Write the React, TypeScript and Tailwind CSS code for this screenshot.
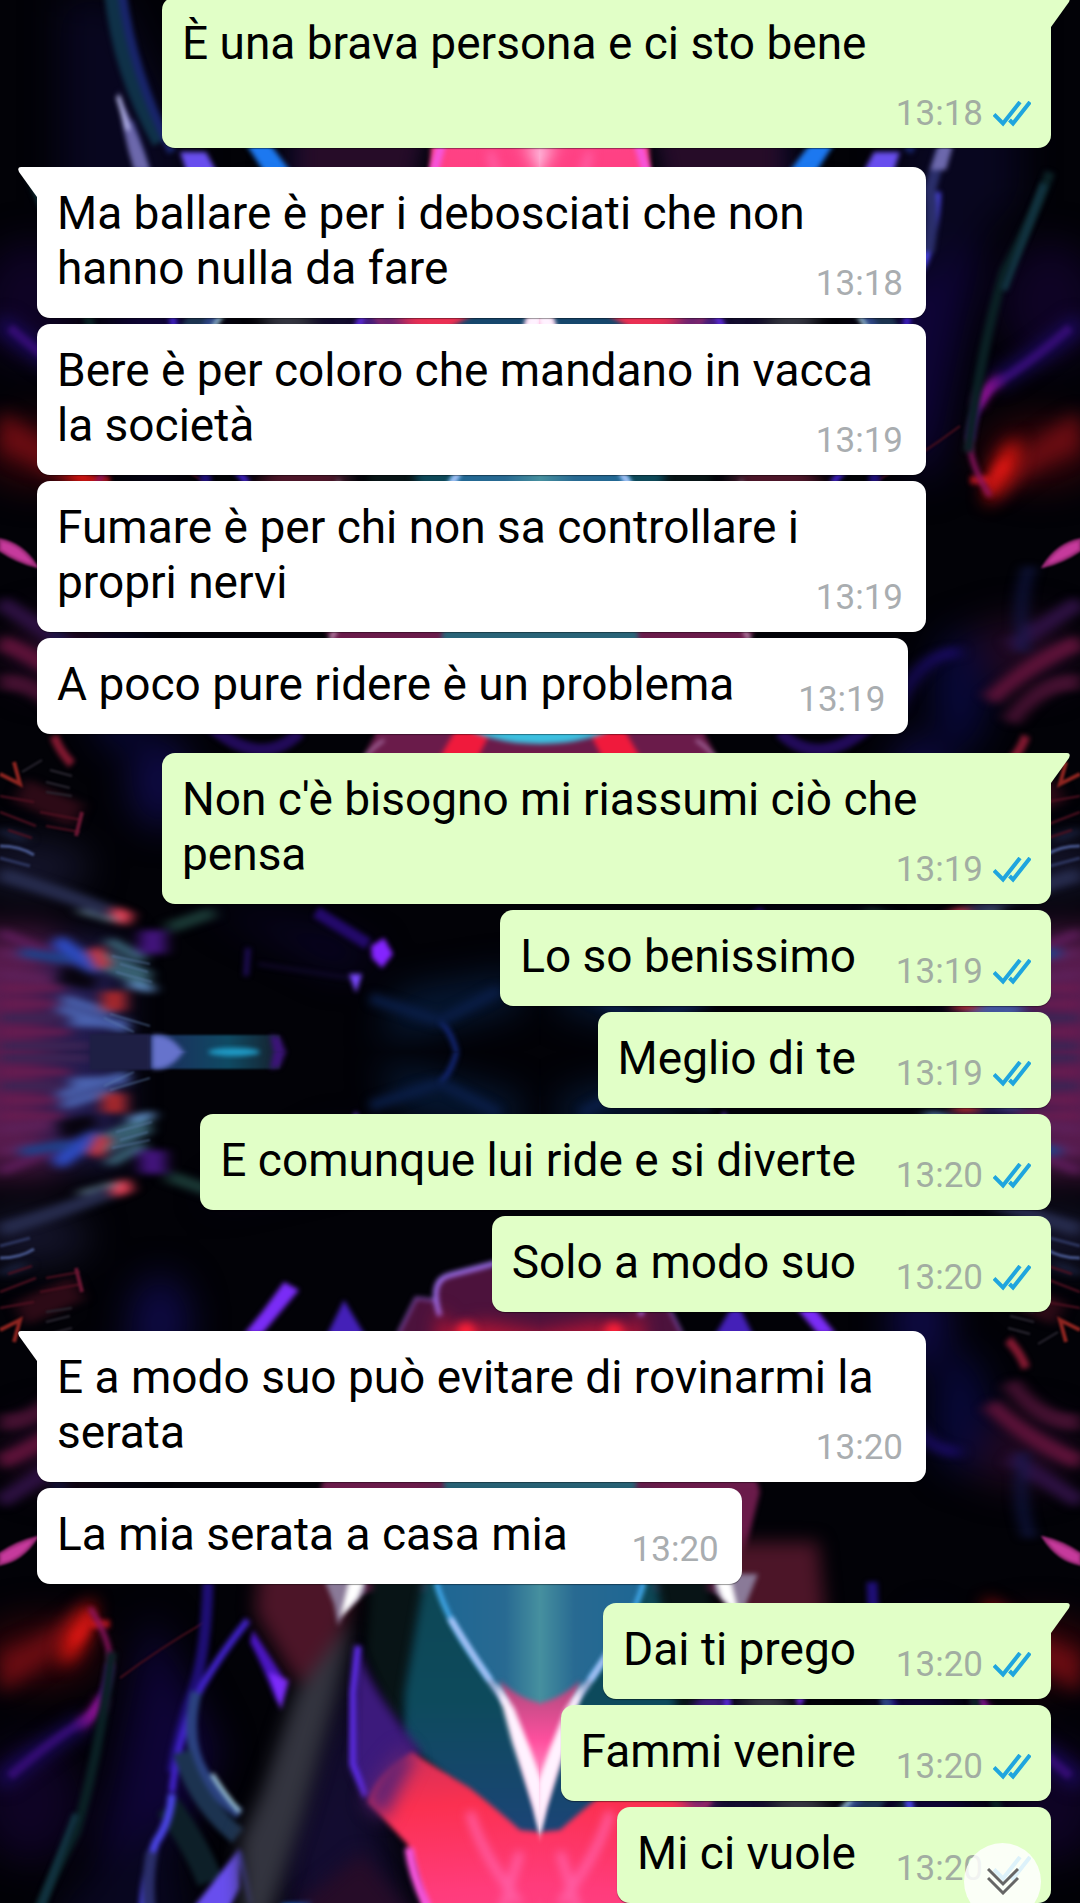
interface Message {
  text: string;
  time: string;
  mine: boolean;
}

const messages: Message[] = [
  { text: "È una brava persona e ci sto bene", time: "13:18", mine: true },
  { text: "Ma ballare è per i debosciati che non hanno nulla da fare", time: "13:18", mine: false },
  { text: "Bere è per coloro che mandano in vacca la società", time: "13:19", mine: false },
  { text: "Fumare è per chi non sa controllare i propri nervi", time: "13:19", mine: false },
  { text: "A poco pure ridere è un problema", time: "13:19", mine: false },
  { text: "Non c'è bisogno mi riassumi ciò che pensa", time: "13:19", mine: true },
  { text: "Lo so benissimo", time: "13:19", mine: true },
  { text: "Meglio di te", time: "13:19", mine: true },
  { text: "E comunque lui ride e si diverte", time: "13:20", mine: true },
  { text: "Solo a modo suo", time: "13:20", mine: true },
  { text: "E a modo suo può evitare di rovinarmi la serata", time: "13:20", mine: false },
  { text: "La mia serata a casa mia", time: "13:20", mine: false },
  { text: "Dai ti prego", time: "13:20", mine: true },
  { text: "Fammi venire", time: "13:20", mine: true },
  { text: "Mi ci vuole", time: "13:20", mine: true },
];

// One quarter of the wallpaper, x 0-540 and y 0-1052 from the centre line down.
// The other three quarters are mirrored copies.
const WallpaperQuarter = () => (
  <g id="quarter">
    {/* Deep colour washes */}
    <g filter="url(#blur18)">
      <rect x="-40" y="-40" width="100" height="160" fill="#5a1c50" />
      <rect x="50" y="-20" width="70" height="130" fill="#221c50" />
      <ellipse cx="30" cy="185" rx="60" ry="26" fill="#15152c" />
      <ellipse cx="160" cy="270" rx="30" ry="46" fill="#0e0a44" />
      <ellipse cx="60" cy="400" rx="60" ry="34" fill="#1f0820" />
      <ellipse cx="120" cy="360" rx="26" ry="60" fill="#08083a" />
      <ellipse cx="40" cy="600" rx="60" ry="34" fill="#300409" />
      <ellipse cx="30" cy="750" rx="50" ry="60" fill="#0e0324" />
      <path d="M150 560L220 700L150 851L90 851Z" fill="#0e0436" />
      <path d="M60 851L170 760L190 900L120 1052H60Z" fill="#08061f" />
      <path d="M280 800L350 600L400 851L430 960L300 1000Z" fill="#130c30" />
      <path d="M380 10L520 45L520 80L400 60Z" fill="#061a38" />
      <path d="M200 150L330 120L380 95L340 80Z" fill="#0a0428" />
    </g>

    {/* Streaks along the left edge */}
    <g filter="url(#smear)" fill="none">
      <path d="M0 6H90M0 34H60" stroke="#3b2454" strokeWidth="8" />
      <path d="M0 20H70M0 48H55M0 64H62" stroke="#6a1c50" strokeWidth="6" />
      <path d="M0 78L50 72M0 100L34 92" stroke="#5c2058" strokeWidth="9" />
      <path d="M0 120L50 98" stroke="#5a1c58" strokeWidth="10" />
      <path d="M58 44L128 22M62 54L112 38M70 30L128 28" stroke="#4a62ae" strokeWidth="9" />
      <path d="M60 78L96 70" stroke="#08040f" strokeWidth="18" />
      <path d="M56 112L98 82" stroke="#2d4cc4" strokeWidth="15" />
      <path d="M20 100L70 92" stroke="#213f86" strokeWidth="10" />
      <path d="M100 88L150 66M104 98L150 76M108 112L144 92" stroke="#437486" strokeWidth="8" />
      <path d="M128 68L154 62" stroke="#5f8cc4" strokeWidth="7" />
      <path d="M102 51H126" stroke="#a8282c" strokeWidth="20" />
      <path d="M94 104L104 84" stroke="#d4343a" strokeWidth="14" />
      <path d="M112 140L130 132" stroke="#f04258" strokeWidth="14" />
      <path d="M80 142L116 132" stroke="#64808e" strokeWidth="6" />
      <path d="M138 98H166V122H140Z" fill="#42147c" />
      <path d="M168 124L214 140" stroke="#1a3835" strokeWidth="12" />
      <path d="M0 178Q60 160 110 140" stroke="#262b4c" strokeWidth="14" />
      <path d="M0 222L26 212" stroke="#1f2748" strokeWidth="6" />
      <path d="M0 370Q40 372 70 330" stroke="#431030" strokeWidth="16" />
      <path d="M0 410Q50 390 90 352" stroke="#5b1238" strokeWidth="16" />
      <path d="M0 450L70 405" stroke="#2c1040" strokeWidth="16" />
      <path d="M120 400Q160 400 186 340" stroke="#160a56" strokeWidth="12" />
      <path d="M50 486Q64 450 56 400" stroke="#131a50" strokeWidth="8" />
      <path d="M20 262L78 236" stroke="#2c0a16" strokeWidth="26" />
    </g>
    <g filter="url(#blur1)" fill="none">
      <path d="M0 206Q20 206 34 197" stroke="#46558a" strokeWidth="3" />
      <path d="M0 194L30 186" stroke="#2c345c" strokeWidth="3" />
      <path d="M110 38L150 26M104 34L134 20M116 80L152 70M120 88L148 80M112 96L150 88" stroke="#5f7fae" strokeWidth="1" />
      <path d="M8 222L32 214M0 240L36 226M46 226L80 220M40 240L82 232M0 256L34 250" stroke="#501020" strokeWidth="2" />
      <path d="M76 216L82 240" stroke="#681632" strokeWidth="4" />
      <path d="M0 278L20 268L14 290" stroke="#8c2420" strokeWidth="4" />
      <path d="M22 280L42 292M46 270L70 264M46 260L72 256M50 282L72 276" stroke="#2b2832" strokeWidth="2" />
      <path d="M0 512Q22 508 36 486Q18 490 0 502Z" fill="#c63a9c" stroke="#a02c7c" strokeWidth="3" />
    </g>
    <path d="M54 316Q60 300 72 288" stroke="#801830" strokeWidth="9" fill="none" filter="url(#blur2)" />

    {/* Centre line */}
    <rect x="90" y="-2" width="60" height="20" fill="#1e1f44" filter="url(#blur1)" />
    <rect x="150" y="-2" width="130" height="19" fill="url(#beam)" filter="url(#blur1)" />
    <path d="M152 -6H187Q176 14 160 17H152Z" fill="#6673cc" filter="url(#blur2)" />
    <path d="M150 -4V17" stroke="#a8304c" strokeWidth="3" filter="url(#blur1)" />
    <path d="M274 -3H287L280 15L270 17Z" fill="#3c1478" filter="url(#blur2)" />
    <ellipse cx="234" cy="0" rx="26" ry="4" fill="#1f9cc8" filter="url(#blur2)" />
    <path d="M457 -2Q452 20 440 31" stroke="#14287a" strokeWidth="5" fill="none" filter="url(#blur2)" />
    <path d="M440 31Q400 44 370 54M440 31L500 62" stroke="#0a1e48" strokeWidth="10" fill="none" filter="url(#blur5)" />

    {/* Violet sparks */}
    <g filter="url(#blur2)">
      <path d="M371 106L384 114L393 98L382 84L372 94Z" fill="#8424ff" />
      <path d="M349 78L362 78L356 59Z" fill="#7a48ff" />
      <path d="M368 108L316 140" stroke="#23096a" strokeWidth="12" />
      <path d="M258 88L350 74" stroke="#120930" strokeWidth="3" />
      <path d="M246 76L248 104" stroke="#1c0c50" strokeWidth="6" />
      <path d="M299 238L284 230L262 260L244 282H262Z" fill="#7a2cf6" />
      <path d="M344 248L326 285H366Z" fill="#4420b8" />
      <path d="M398 282L416 246L434 248Q430 225 450 222L545 208V330H370Z" fill="#4c123c" />
      <path d="M398 282L416 246L434 248" fill="none" stroke="#7c4aa8" strokeWidth="3" />
      <path d="M440 264Q428 228 450 223L500 210" fill="none" stroke="#a070f0" strokeWidth="5" />
      <path d="M206 330Q260 280 300 320" stroke="#210a58" strokeWidth="12" fill="none" />
    </g>
    <path d="M440 256Q450 290 480 270L560 284V330H430Z" fill="#b41434" filter="url(#blur8)" />
    <circle cx="466" cy="280" r="10" fill="#ff2038" filter="url(#blur5)" />

    {/* Middle core, seen between the bubbles */}
    <g filter="url(#blur2)">
      <path d="M362 292Q380 330 400 350Q330 390 320 440L345 540L560 540V296H480Z" fill="#6a1b4a" />
      <path d="M362 292Q372 304 384 312" stroke="#cda6dc" strokeWidth="2" fill="none" />
      <path d="M440 295L478 295L496 330L460 330Z" fill="#f01a3c" />
      <ellipse cx="540" cy="345" rx="90" ry="37" fill="#3cc0e0" />
      <path d="M440 400H560V740H480Z" fill="#2a6478" />
      <path d="M330 412L336 422" stroke="#e9c4e4" strokeWidth="3" />
      <path d="M455 565L490 580" stroke="#2b8bd4" strokeWidth="6" />
      <path d="M400 730H450" stroke="#a83050" strokeWidth="14" />
      <path d="M90 572H110" stroke="#a2141c" strokeWidth="8" />
    </g>

    {/* Red ember and magenta loop */}
    <g fill="none">
      <path d="M84 560Q66 600 30 622L0 640L0 600Q40 590 84 552Z" fill="#6a0c12" filter="url(#blur8)" />
      <path d="M94 546Q94 596 62 614Q56 584 94 546Z" fill="#f61810" filter="url(#blur8)" />
      <path d="M74 588Q88 578 90 560" stroke="#e01818" strokeWidth="6" filter="url(#blur5)" />
      <path d="M90 556Q112 590 110 615" stroke="#8c1460" strokeWidth="5" filter="url(#blur2)" />
      <path d="M110 612Q106 650 86 668Q54 686 10 724" stroke="#5a1288" strokeWidth="8" filter="url(#blur2)" />
      <path d="M102 646Q96 664 78 674" stroke="#981290" strokeWidth="10" filter="url(#blur5)" />
      <path d="M0 730Q50 690 86 670" stroke="#1d0a66" strokeWidth="16" filter="url(#blur8)" />
      <path d="M120 626Q160 596 205 570" stroke="#4b0f1c" strokeWidth="2" filter="url(#blur1)" />
      <path d="M112 600Q100 700 76 780Q44 840 30 880" stroke="#0a2024" strokeWidth="10" filter="url(#blur2)" />
      <path d="M76 762Q50 830 36 868" stroke="#123442" strokeWidth="7" filter="url(#blur2)" />
    </g>

    {/* Violet and steel strands */}
    <g fill="none" filter="url(#blur2)">
      <path d="M208 530Q206 600 194 636Q178 680 172 720" stroke="#1e0e74" strokeWidth="11" />
      <path d="M248 568Q222 600 202 634Q178 680 172 740" stroke="#4022c8" strokeWidth="7" />
      <path d="M196 640Q184 690 204 722Q214 744 240 762" stroke="#2b4280" strokeWidth="11" />
      <path d="M212 722Q224 742 240 760" stroke="#b0dcec" strokeWidth="4" />
      <path d="M182 700Q196 750 238 784" stroke="#1c3350" strokeWidth="18" />
      <path d="M168 754Q200 800 210 830" stroke="#0d1f28" strokeWidth="26" />
      <path d="M172 742Q170 770 156 790Q144 820 143 860" stroke="#4a44e4" strokeWidth="8" />
      <path d="M152 800Q146 830 150 862Q140 900 128 930" stroke="#2a2e6a" strokeWidth="12" />
      <path d="M118 962Q122 920 134 882L150 882Q140 914 124 946Z" fill="#6c68ac" />
      <path d="M118 956L128 922" stroke="#c4c4f8" strokeWidth="4" />
      <path d="M253 578L288 632L281 655L276 648Q262 612 250 590Z" fill="#4a16c4" />
      <path d="M289 628L281 658L268 620Z" fill="#7e2cff" />
      <path d="M240 796L196 852L180 900L206 900L240 836Z" fill="#684eee" />
      <path d="M240 800L252 852" stroke="#3c34c0" strokeWidth="5" />
      <path d="M282 852L246 908H270L314 850Z" fill="#1c78f0" />
      <path d="M112 1060Q120 980 160 910" stroke="#0f3148" strokeWidth="16" />
      <path d="M122 1060Q132 980 172 900" stroke="#18246a" strokeWidth="9" />
    </g>

    {/* Wine coloured fold with the grey band below */}
    <g filter="url(#blur8)">
      <path d="M262 490H372L345 570L310 640L290 620L255 560Z" fill="#4c1528" />
      <path d="M354 566L335 590L296 640L262 740L240 790L242 870H268L302 766L334 650Z" fill="#33343f" />
    </g>
    <path d="M322 522L366 522L366 540L344 560L338 574L334 552Z" fill="#8a7a98" filter="url(#blur2)" />
    <path d="M350 524L368 520L358 546L340 566Z" fill="#ffffff" filter="url(#blur2)" />
    <path d="M372 510H430L402 664L392 672L366 600Z" fill="#081416" filter="url(#blur5)" />

    {/* Teal shell */}
    <path d="M426 440L560 440V790L512 786L402 688L404 640L424 524Z" fill="url(#shell)" filter="url(#blur5)" />
    <path d="M424 440Q424 520 452 570Q480 614 500 640L550 690V440Z" fill="url(#core)" filter="url(#blur1)" />
    <path d="M300 851L362 800L410 860L440 1000H300Z" fill="#260c28" filter="url(#blur8)" />

    {/* Violet blade */}
    <path d="M357 590Q362 620 396 666L420 700L378 752L366 746L352 714Z" fill="#3c1a7c" filter="url(#blur5)" />
    <path d="M358 594L353 640V712L366 744" stroke="#5b2be0" strokeWidth="7" fill="none" filter="url(#blur2)" />

    {/* Red lobe */}
    <path d="M368 750Q376 722 412 700Q430 712 470 736Q500 760 520 778L560 782V1070H440L430 880Q420 830 407 792Z" fill="url(#lobe)" filter="url(#blur2)" />
    <path d="M364 750Q380 712 404 694L414 706L384 768Z" fill="#5c2274" filter="url(#blur8)" />
    <path d="M409 796Q412 822 426 852L442 910" stroke="#f655dc" strokeWidth="9" fill="none" filter="url(#blur2)" />
    <path d="M470 760Q480 800 520 852M490 900L520 800" stroke="#ff5ea4" strokeWidth="8" fill="none" filter="url(#blur5)" />
    <path d="M560 850L524 910H560Z" fill="#ffd0ee" filter="url(#blur8)" />

    {/* Bright V */}
    <path d="M500 628Q522 652 560 654V780H540L514 680Z" fill="url(#flare)" filter="url(#blur2)" />
    <path d="M436 530Q446 570 490 628" stroke="#45b0f4" strokeWidth="5" fill="none" filter="url(#blur2)" />
    <path d="M450 566Q474 606 506 652" stroke="#c4ccff" strokeWidth="5" fill="none" filter="url(#blur2)" />
    <path d="M496 630L514 656L530 696L542 730V790L534 756L512 690Z" fill="#fff2ff" filter="url(#blur2)" />
  </g>
);

const Wallpaper = () => (
  <svg
    className="absolute inset-0 h-full w-full"
    viewBox="0 0 1080 1903"
    preserveAspectRatio="xMidYMid slice"
    aria-hidden="true"
  >
    <defs>
      <filter id="blur1" x="-50%" y="-50%" width="200%" height="200%" colorInterpolationFilters="sRGB">
        <feGaussianBlur stdDeviation="1" />
      </filter>
      <filter id="blur2" x="-50%" y="-50%" width="200%" height="200%" colorInterpolationFilters="sRGB">
        <feGaussianBlur stdDeviation="2.8" />
      </filter>
      <filter id="blur5" x="-100%" y="-100%" width="300%" height="300%" colorInterpolationFilters="sRGB">
        <feGaussianBlur stdDeviation="5" />
      </filter>
      <filter id="blur8" x="-100%" y="-100%" width="300%" height="300%" colorInterpolationFilters="sRGB">
        <feGaussianBlur stdDeviation="9" />
      </filter>
      <filter id="blur18" x="-50%" y="-50%" width="200%" height="200%" colorInterpolationFilters="sRGB">
        <feGaussianBlur stdDeviation="18" />
      </filter>
      <filter id="smear" x="-50%" y="-50%" width="200%" height="200%" colorInterpolationFilters="sRGB">
        <feGaussianBlur stdDeviation="7 3" />
      </filter>
      <linearGradient id="beam">
        <stop offset="0" stopColor="#1d2a5c" />
        <stop offset="0.6" stopColor="#0f4a63" />
        <stop offset="1" stopColor="#16202c" />
      </linearGradient>
      <linearGradient id="shell" x1="0" y1="0" x2="0" y2="1">
        <stop offset="0" stopColor="#0d4450" />
        <stop offset="0.6" stopColor="#0d4a5c" />
        <stop offset="1" stopColor="#1c4478" />
      </linearGradient>
      <linearGradient id="core" gradientUnits="userSpaceOnUse" x1="424" y1="0" x2="540" y2="0">
        <stop offset="0" stopColor="#1c6694" />
        <stop offset="0.7" stopColor="#286a92" />
        <stop offset="1" stopColor="#46909f" />
      </linearGradient>
      <linearGradient id="lobe" gradientUnits="userSpaceOnUse" x1="440" y1="700" x2="470" y2="1052">
        <stop offset="0" stopColor="#d43058" />
        <stop offset="0.15" stopColor="#fb3050" />
        <stop offset="0.4" stopColor="#ff3c7c" />
        <stop offset="1" stopColor="#ff4f9a" />
      </linearGradient>
      <linearGradient id="flare" x1="0" y1="0" x2="0" y2="1">
        <stop offset="0" stopColor="#a94a7c" />
        <stop offset="0.4" stopColor="#ff4f9e" />
        <stop offset="1" stopColor="#ffe6fb" />
      </linearGradient>
      <clipPath id="quarterClip">
        <rect x="0" y="0" width="541" height="1053" />
      </clipPath>
      <g id="tile" clipPath="url(#quarterClip)">
        <WallpaperQuarter />
      </g>
    </defs>
    <rect width="1080" height="1903" fill="#020207" />
    <use href="#tile" transform="translate(0 1052)" />
    <use href="#tile" transform="translate(1080 1052) scale(-1 1)" />
    <use href="#tile" transform="translate(0 1052) scale(1 -1)" />
    <use href="#tile" transform="translate(1080 1052) scale(-1 -1)" />
  </svg>
);

const ReadTicks = () => (
  <svg width="38" height="26" viewBox="0 1 38 26" fill="none" stroke="#1fa5de" strokeWidth="4" role="img" aria-label="Letto">
    <path d="M1 14.500L10 23.500L27 2" />
    <path d="M16.500 20L20 23.500L37 2" />
  </svg>
);

const Tail = ({ mine }: { mine: boolean }) => (
  <svg
    className={mine ? "absolute top-0 left-full text-[#e1ffc7]" : "absolute top-0 right-full -scale-x-100 text-white"}
    width="19"
    height="30"
    viewBox="0 0 19 30"
    aria-hidden="true"
  >
    <path d="M-1 0H16Q20 0 18 5L0 30H-1Z" fill="currentColor" />
  </svg>
);

const Bubble = ({ message, first }: { message: Message; first: boolean }) => {
  const { text, time, mine } = message;

  return (
    <li className={`flex ${mine ? "justify-end pr-[29px] pl-[162px]" : "pr-[154px] pl-[37px]"} ${first ? "mt-[19px] first:-mt-[3px]" : "mt-[6px]"}`}>
      <div
        className={`relative rounded-[13px] px-5 pt-[19px] pb-[22px] shadow-[0_1px_1px_rgba(0,0,0,0.4)] ${
          mine ? "bg-[#e1ffc7]" : "bg-white"
        } ${first ? (mine ? "rounded-tr-none" : "rounded-tl-none") : ""}`}
      >
        {first && <Tail mine={mine} />}
        <p className="text-[46px] leading-[55px] text-black">
          {text}
          {/* keeps room for the time on the last line */}
          <span className={mine ? "inline-block w-[175px]" : "inline-block w-[154px]"} />
        </p>
        <div
          className={`absolute bottom-[14px] flex items-center gap-[10px] text-[35px] leading-[40px] ${
            mine ? "right-5 text-[#a2ada2]" : "right-[23px] text-[#a9adb0]"
          }`}
        >
          <time>{time}</time>
          {mine && <ReadTicks />}
        </div>
      </div>
    </li>
  );
};

const App = () => {
  return (
    <main className="relative min-h-screen overflow-hidden bg-black font-['Roboto',sans-serif]">
      <Wallpaper />

      <ul className="relative flex flex-col">
        {messages.map((message, i) => (
          <Bubble key={i} message={message} first={i === 0 || messages[i - 1].mine !== message.mine} />
        ))}
      </ul>

      {/* Scroll to bottom */}
      <button
        type="button"
        aria-label="Vai in fondo"
        className="fixed right-[39px] -bottom-[17px] flex h-[77px] w-[77px] items-center justify-center rounded-full bg-white/85"
      >
        <svg width="32" height="27" viewBox="0 0 32 27" fill="none" stroke="#666666" strokeWidth="3">
          <path d="M1 1L16 16L31 1" />
          <path d="M1 10L16 25L31 10" />
        </svg>
      </button>
    </main>
  );
};

export default App;
